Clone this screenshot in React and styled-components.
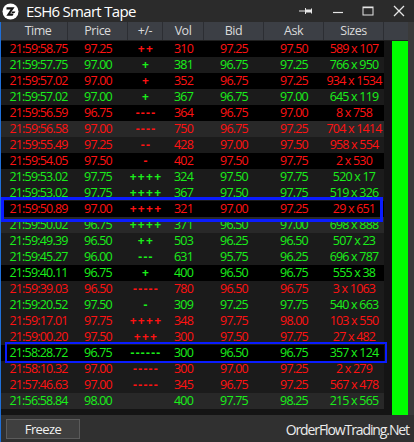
import React from 'react';
import styled, { createGlobalStyle } from 'styled-components';

const GlobalStyle = createGlobalStyle`
  html, body { margin: 0; padding: 0; background: #2b2b2b; }
  * { box-sizing: border-box; }
`;

const COLS = '8px 59px 60px 35px 41px 60px 60px 60px';

const rows = [
  ['21:59:58.75', '97.25', '++', '310', '97.25', '97.50', '589 x 107', 'r', 'k'],
  ['21:59:57.75', '97.00', '+', '381', '96.75', '97.25', '766 x 950', 'g', 'd'],
  ['21:59:57.02', '97.00', '+', '352', '96.75', '97.25', '934 x 1534', 'r', 'k'],
  ['21:59:57.02', '97.00', '+', '367', '96.75', '97.00', '645 x 119', 'g', 'd'],
  ['21:59:56.59', '96.75', '----', '364', '96.75', '97.00', '8 x 758', 'r', 'k'],
  ['21:59:56.58', '97.00', '----', '750', '96.75', '97.25', '704 x 1414', 'r', 'm'],
  ['21:59:55.49', '97.25', '--', '428', '97.00', '97.50', '958 x 554', 'r', 'd'],
  ['21:59:54.05', '97.50', '-', '402', '97.50', '97.75', '2 x 530', 'r', 'k'],
  ['21:59:53.02', '97.75', '++++', '324', '97.50', '97.75', '520 x 17', 'g', 'd'],
  ['21:59:53.02', '97.75', '++++', '367', '97.50', '97.75', '519 x 326', 'g', 'd'],
  ['21:59:50.89', '97.00', '++++', '321', '97.00', '97.25', '29 x 651', 'r', 'k', 'a'],
  ['21:59:50.02', '96.75', '++++', '371', '96.50', '97.00', '698 x 888', 'g', 'm'],
  ['21:59:49.39', '96.50', '++', '503', '96.25', '96.50', '507 x 23', 'g', 'd'],
  ['21:59:45.27', '96.00', '---', '631', '95.75', '96.25', '696 x 787', 'g', 'd'],
  ['21:59:40.11', '96.75', '+', '400', '96.50', '96.75', '555 x 38', 'g', 'k'],
  ['21:59:39.03', '96.50', '-----', '780', '96.50', '96.75', '3 x 1063', 'r', 'd'],
  ['21:59:20.52', '97.50', '-', '309', '97.25', '97.75', '540 x 663', 'g', 'd'],
  ['21:59:17.01', '97.75', '++++', '348', '97.75', '98.00', '103 x 550', 'r', 'd'],
  ['21:59:00.20', '97.50', '+++', '300', '97.50', '97.75', '27 x 482', 'r', 'd'],
  ['21:58:28.72', '96.75', '------', '300', '96.50', '96.75', '357 x 124', 'g', 'k', 'b'],
  ['21:58:10.32', '97.00', '-----', '300', '97.00', '97.25', '2 x 279', 'r', 'd'],
  ['21:57:46.63', '97.00', '-----', '345', '96.75', '97.25', '567 x 478', 'r', 'd'],
  ['21:56:58.84', '98.00', '', '400', '97.75', '98.25', '215 x 565', 'g', 'm'],
];

const BG = { k: '#000000', d: '#1b1b1b', m: '#282828' };
const FG = { r: '#ff1212', g: '#1aef1a' };

const Window = styled.div`
  width: 414px;
  height: 442px;
  display: flex;
  flex-direction: column;
  background: #2b2b2b;
  font-family: "Open Sans", "Noto Sans", sans-serif;
  overflow: hidden;
`;

const TitleBar = styled.div`
  height: 22px;
  display: flex;
  align-items: center;
  padding-left: 2px;
  background: #2b2b2b;
  color: #ffffff;
`;

const Title = styled.span`
  margin-left: 7px;
  font-size: 15px;
  letter-spacing: -0.7px;
  line-height: 22px;
`;

const Controls = styled.div`
  margin-left: auto;
  display: flex;
  align-items: center;
  height: 22px;
`;

const CtrlButton = styled.div`
  width: ${p => p.$w || 30}px;
  height: 22px;
  display: flex;
  align-items: center;
  justify-content: center;
  color: #e6e6e6;
`;

const Frame = styled.div`
  flex: 1;
  display: flex;
  flex-direction: column;
  border-left: 1px solid #1f6fd8;
  min-height: 0;
`;

const Main = styled.div`
  display: flex;
  height: 393px;
`;

const Table = styled.div`
  width: 407px;
  display: flex;
  flex-direction: column;
`;

const HeaderRow = styled.div`
  display: grid;
  grid-template-columns: ${COLS} 24px;
  height: 19px;
  background: #3c3f45;
  border-bottom: 1px solid #1f1f1f;
`;

const HeaderCell = styled.div`
  color: #dadada;
  font-size: 12.5px;
  letter-spacing: -0.5px;
  line-height: 18px;
  text-align: center;
  border-right: ${p => (p.$plain ? 'none' : '1px solid #2c2e33')};
`;

const Body = styled.div`
  flex: 1;
  display: flex;
  background: #141414;
`;

const RowList = styled.div`
  width: 383px;
  display: flex;
  flex-direction: column;
`;

const Row = styled.div`
  position: relative;
  display: grid;
  grid-template-columns: ${COLS};
  height: 16px;
  background: ${p => p.$bg};
  color: ${p => p.$fg};
`;

const Cell = styled.div`
  display: flex;
  justify-content: center;
  min-width: 0;
  font-size: 12.5px;
  line-height: 16px;
  letter-spacing: -0.8px;
  white-space: nowrap;
`;

const SignCell = styled.div`
  display: flex;
  justify-content: center;
  font-size: 12px;
  font-weight: 700;
  line-height: 16px;
  letter-spacing: 1.3px;
  padding-left: 1px;
  white-space: nowrap;
`;

const Highlight = styled.div`
  position: absolute;
  z-index: 2;
  pointer-events: none;
  border: ${p => p.$t}px solid #0a1cff;
  left: ${p => p.$l}px;
  right: ${p => p.$r}px;
  top: ${p => p.$top}px;
  bottom: ${p => p.$bot}px;
`;

const Gap = styled.div`
  flex: 1;
`;

const Meter = styled.div`
  width: 16px;
  background: #00ff00;
`;

const RightStrip = styled.div`
  width: 6px;
  background: #3a3a3a;
`;

const Footer = styled.div`
  flex: 1;
  display: flex;
  align-items: center;
  justify-content: space-between;
  padding: 0 5px 0 5px;
  background: #303030;
`;

const FreezeButton = styled.button`
  width: 74px;
  height: 20px;
  margin-top: 1px;
  padding: 0;
  background: #3f3f3f;
  border: 1px solid #5b5b5b;
  color: #f0f0f0;
  font-family: "Open Sans", "Noto Sans", sans-serif;
  font-size: 13px;
  letter-spacing: -0.6px;
  line-height: 18px;
`;

const Brand = styled.span`
  color: #ececec;
  font-size: 14px;
  letter-spacing: -1.1px;
  margin-top: 1px;
`;

const Logo = () => (
  <svg width="17" height="17" viewBox="0 0 17 17">
    <circle cx="8.5" cy="8.5" r="8" fill="#ffffff" />
    <path d="M4.5 4.2 H12.6 L8.2 10.4 H11.8 L10.6 12.8 H4.4 L8.6 6.6 H4.5 Z" fill="#111" />
    <path d="M9.6 8.6 L13.4 8.6 L12.6 10 L9.6 10 Z" fill="#111" />
  </svg>
);

const PinIcon = () => (
  <svg width="16" height="10" viewBox="0 0 16 10">
    <line x1="1" y1="5" x2="7" y2="5" stroke="#e6e6e6" strokeWidth="1" />
    <line x1="7.5" y1="2" x2="7.5" y2="8" stroke="#e6e6e6" strokeWidth="1" />
    <rect x="8" y="3.5" width="5" height="3" fill="#e6e6e6" />
    <line x1="13.5" y1="2.5" x2="13.5" y2="7.5" stroke="#e6e6e6" strokeWidth="1" />
  </svg>
);

const MinIcon = () => (
  <svg width="12" height="10" viewBox="0 0 12 10">
    <line x1="1" y1="6.5" x2="11" y2="6.5" stroke="#e6e6e6" strokeWidth="1.2" />
  </svg>
);

const MaxIcon = () => (
  <svg width="12" height="10" viewBox="0 0 12 10">
    <rect x="1" y="1" width="10" height="8" fill="none" stroke="#e6e6e6" strokeWidth="1" />
    <line x1="1" y1="1.6" x2="11" y2="1.6" stroke="#e6e6e6" strokeWidth="1.2" />
  </svg>
);

const CloseIcon = () => (
  <svg width="12" height="12" viewBox="0 0 12 12">
    <path d="M1 1 L11 11 M11 1 L1 11" stroke="#e6e6e6" strokeWidth="1.3" />
  </svg>
);

const highlights = {
  a: { t: 3, l: 0, r: 1, top: -4, bot: -5 },
  b: { t: 2, l: 4, r: -3, top: -3, bot: -2 },
};

export default function App() {
  return (
    <Window>
      <GlobalStyle />
      <TitleBar>
        <Logo />
        <Title>ESH6 Smart Tape</Title>
        <Controls>
          <CtrlButton $w={34}><PinIcon /></CtrlButton>
          <CtrlButton><MinIcon /></CtrlButton>
          <CtrlButton><MaxIcon /></CtrlButton>
          <CtrlButton $w={31}><CloseIcon /></CtrlButton>
        </Controls>
      </TitleBar>
      <Frame>
        <Main>
          <Table>
            <HeaderRow>
              <HeaderCell $plain />
              <HeaderCell>Time</HeaderCell>
              <HeaderCell>Price</HeaderCell>
              <HeaderCell>+/-</HeaderCell>
              <HeaderCell>Vol</HeaderCell>
              <HeaderCell>Bid</HeaderCell>
              <HeaderCell>Ask</HeaderCell>
              <HeaderCell>Sizes</HeaderCell>
              <HeaderCell $plain />
            </HeaderRow>
            <Body>
              <RowList>
                {rows.map((r, i) => {
                  const h = r[9] ? highlights[r[9]] : null;
                  return (
                    <Row key={i} $bg={BG[r[8]]} $fg={FG[r[7]]}>
                      <Cell />
                      <Cell>{r[0]}</Cell>
                      <Cell>{r[1]}</Cell>
                      <SignCell>{r[2]}</SignCell>
                      <Cell>{r[3]}</Cell>
                      <Cell>{r[4]}</Cell>
                      <Cell>{r[5]}</Cell>
                      <Cell>{r[6]}</Cell>
                      {h && <Highlight $t={h.t} $l={h.l} $r={h.r} $top={h.top} $bot={h.bot} />}
                    </Row>
                  );
                })}
              </RowList>
              <Gap />
              <Meter />
            </Body>
          </Table>
          <RightStrip />
        </Main>
        <Footer>
          <FreezeButton>Freeze</FreezeButton>
          <Brand>OrderFlowTrading.Net</Brand>
        </Footer>
      </Frame>
    </Window>
  );
}
